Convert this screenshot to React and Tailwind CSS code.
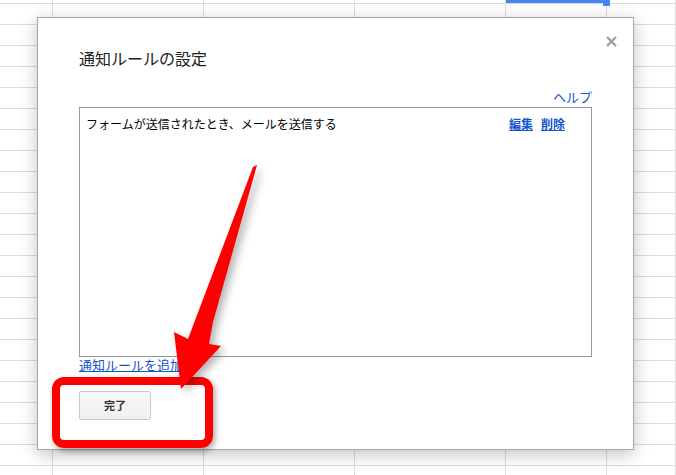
import React from "react";

const COLS = [53, 151, 151, 151, 101, 69];

function GridRow({ h }) {
  return (
    <div className="flex border-b border-[#dcdcdc]" style={{ height: h }}>
      {COLS.map((w, i) => (
        <div
          key={i}
          className="shrink-0 border-r border-[#dcdcdc]"
          style={{ width: w }}
        />
      ))}
    </div>
  );
}

export default function App() {
  const rows = [];
  rows.push(<GridRow key="first" h={4} />);
  for (let i = 0; i < 23; i++) rows.push(<GridRow key={i} h={21} />);

  return (
    <div
      className="relative w-[676px] h-[475px] overflow-hidden bg-white"
      style={{ fontFamily: '"Noto Sans CJK JP", "Noto Sans", sans-serif' }}
    >
      {/* spreadsheet grid */}
      <div className="flex flex-col">{rows}</div>

      {/* selected cell */}
      <div className="absolute left-[506px] top-0 w-[100px] h-[3px] bg-[#4285f4]" />
      <div className="absolute left-[603px] top-0 w-[7px] h-[6px] bg-[#4285f4]" />

      {/* dialog */}
      <div className="absolute left-[37px] top-[17px] w-[597px] h-[433px] bg-white border border-[#a8a8a8] shadow-[0_4px_16px_rgba(0,0,0,0.25)] pl-[41px] pr-[16px] pt-[18px] flex flex-col">
        <div className="flex justify-end h-[12px]">
          <button className="w-[11px] h-[11px]">
            <svg width="11" height="11" viewBox="0 0 11 11">
              <path d="M1 1 L10 10 M10 1 L1 10" stroke="#a0a0a0" strokeWidth="2.4" />
            </svg>
          </button>
        </div>

        <div className="pr-[25px] flex flex-col">
          <div className="h-[20px] text-[16px] leading-[20px] text-[#222]">
            通知ルールの設定
          </div>

          <div className="mt-[21px] h-[16px] flex justify-end text-[13px] leading-[16px] text-[#1155cc]">
            <span>ヘルプ</span>
          </div>

          <div className="mt-[2px] h-[250px] border border-[#9a9a9a] pt-[8px] pl-[6px] pr-[26px]">
            <div className="flex items-start text-[12px] leading-[16px]">
              <span className="flex-1 text-black">
                フォームが送信されたとき、メールを送信する
              </span>
              <span className="font-bold text-[#1155cc] underline">編集</span>
              <span className="ml-[8px] font-bold text-[#1155cc] underline">削除</span>
            </div>
          </div>

          <div className="h-[16px] text-[13px] leading-[16px] text-[#1155cc] underline">
            通知ルールを追加
          </div>

          <div className="mt-[18px] flex">
            <button className="w-[72px] h-[29px] rounded-[2px] border border-[#c8c8c8] bg-gradient-to-b from-[#f8f8f8] to-[#f0f0f0] text-[11px] font-bold text-[#333] flex items-center justify-center">
              完了
            </button>
          </div>
        </div>
      </div>

      {/* red highlight box */}
      <div className="absolute left-[52px] top-[377px] w-[161px] h-[71px] rounded-[12px] border-[8px] border-[#ff0000] shadow-[2px_3px_6px_rgba(0,0,0,0.35)]" />

      {/* red arrow */}
      <svg
        className="absolute left-0 top-0"
        width="676"
        height="475"
        style={{ filter: "drop-shadow(4px 4px 4px rgba(0,0,0,0.3))" }}
      >
        <polygon
          points="257,165 213,322 209,344 221,346 181,389 174,332 188,339 253,167"
          fill="#ff0000"
        />
      </svg>
    </div>
  );
}
